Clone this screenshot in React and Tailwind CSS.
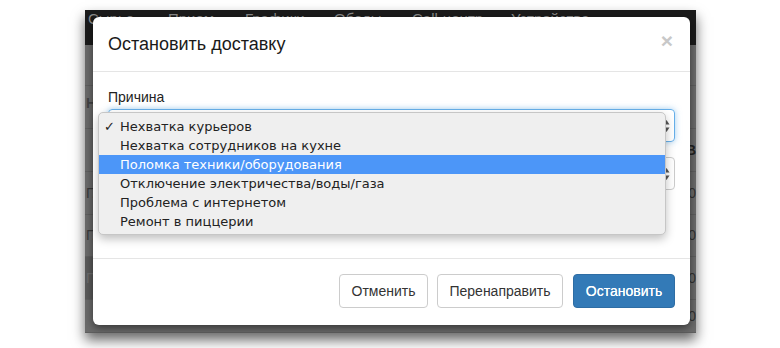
import React from "react";

const navItems = [
  { label: "Сырье", w: "w-[80px]" },
  { label: "Прием", w: "w-[77px]" },
  { label: "Графики", w: "w-[89px]" },
  { label: "Обеды", w: "w-[78px]" },
  { label: "Call-центр", w: "w-[99px]" },
  { label: "Устройства", w: "w-[100px]" },
];

const reasons = [
  "Нехватка курьеров",
  "Нехватка сотрудников на кухне",
  "Поломка техники/оборудования",
  "Отключение электричества/воды/газа",
  "Проблема с интернетом",
  "Ремонт в пиццерии",
];

const bgRows = [
  { h: "h-[41px]", left: "", right: "" },
  { h: "h-[43px]", left: "Н", right: "" },
  { h: "h-[43px]", left: "", right: "В" },
  { h: "h-[43px]", left: "Г.", right: "0" },
  { h: "h-[42px]", left: "Г.", right: "0" },
  { h: "h-[43px]", left: "П", right: "0", dark: true },
  { h: "h-[33px]", left: "", right: "30" },
];

const Stepper = () => (
  <svg width="7" height="14" viewBox="0 0 7 14" className="block">
    <path d="M0.5 5.5 L3.5 1 L6.5 5.5 Z" fill="#555" />
    <path d="M0.5 8.5 L3.5 13 L6.5 8.5 Z" fill="#555" />
  </svg>
);

export default function App() {
  return (
    <div
      className="w-[780px] h-[348px] bg-white pl-[85px] pt-[10px]"
      style={{ fontFamily: '"Liberation Sans", Arial, sans-serif' }}
    >
      <div className="relative w-[611px] h-[323px] bg-[#6b6b6b] shadow-[0_7px_12px_rgba(0,0,0,0.6)] overflow-hidden">
        {/* dark top navigation */}
        <div className="h-[35px] bg-[#1b1b1b] flex items-start pl-[3px] text-[15px] leading-[15px] text-[#8a8a8a]">
          {navItems.map((n) => (
            <div key={n.label} className={`${n.w} pt-[1px]`}>
              {n.label}
            </div>
          ))}
        </div>

        {/* dimmed table behind the backdrop */}
        <div className="flex flex-col">
          {bgRows.map((r, i) => (
            <div
              key={i}
              className={`${r.h} flex items-center justify-between border-b border-[#5f5f5f] text-[14px] text-[#3a3a3a]`}
            >
              <div
                className={`w-[8px] h-full flex items-center pl-[1px] ${
                  r.dark ? "bg-[#5a5a5a] text-[#6e6e6e]" : ""
                } ${i === 1 ? "font-bold text-[#444] pb-[8px]" : ""}`}
              >
                {r.left}
              </div>
              <div className={i === 2 ? "font-bold text-[#222]" : "text-[#333]"}>
                {r.right}
              </div>
            </div>
          ))}
        </div>

        {/* modal */}
        <div className="absolute left-[8px] top-[7px] w-[597px] h-[308px] bg-white rounded-[6px] shadow-[0_3px_9px_rgba(0,0,0,0.5)] flex flex-col">
          <div className="h-[55px] border-b border-[#e5e5e5] flex items-center justify-between pl-[15px] pr-[15px]">
            <div className="text-[18px] text-[#1a1a1a] pt-[1px]">Остановить доставку</div>
            <div className="text-[21px] font-bold leading-none text-[#c8c8c8] -mt-[8px] pr-[2px]">×</div>
          </div>

          <div className="px-[15px] pt-[15px] pb-[68px] relative">
            <div className="text-[14px] leading-[20px] text-[#222] mb-[2px]">Причина</div>
            <div className="h-[33px] rounded-[4px] border border-[#66afe9] shadow-[0_0_6px_rgba(102,175,233,0.6)] flex items-center justify-end pr-[4px]">
              <Stepper />
            </div>
            <div className="mt-[15px] h-[33px] rounded-[4px] border border-[#cccccc] flex items-center justify-end pr-[4px]">
              <Stepper />
            </div>
          </div>

          <div className="border-t border-[#e5e5e5] pt-[15px] pr-[15px] flex justify-end text-[14px]">
            <button className="w-[89px] h-[34px] rounded-[4px] border border-[#cccccc] bg-white text-[#333]">
              Отменить
            </button>
            <button className="ml-[9px] w-[126px] h-[34px] rounded-[4px] border border-[#cccccc] bg-white text-[#333]">
              Перенаправить
            </button>
            <button className="ml-[10px] w-[102px] h-[34px] rounded-[4px] border border-[#2e6da4] bg-[#337ab7] text-white [text-shadow:0_0_0.4px_#fff]">
              Остановить
            </button>
          </div>

          {/* native select popup */}
          <div
            className="absolute left-[5px] top-[95px] w-[568px] h-[123px] bg-[#efefef] border border-[#c6c6c6] rounded-[5px] shadow-[0_4px_10px_rgba(0,0,0,0.25)] pt-[4px]"
            style={{ fontFamily: '"DejaVu Sans", Verdana, sans-serif' }}
          >
            {reasons.map((r, i) => (
              <div
                key={r}
                className={`h-[19px] flex items-center text-[13px] ${
                  i === 2 ? "bg-[#4c96f8] text-white" : "text-[#222]"
                }`}
              >
                <span className="w-[21px] pl-[5px]">{i === 0 ? "✓" : ""}</span>
                <span>{r}</span>
              </div>
            ))}
          </div>
        </div>
      </div>
    </div>
  );
}
